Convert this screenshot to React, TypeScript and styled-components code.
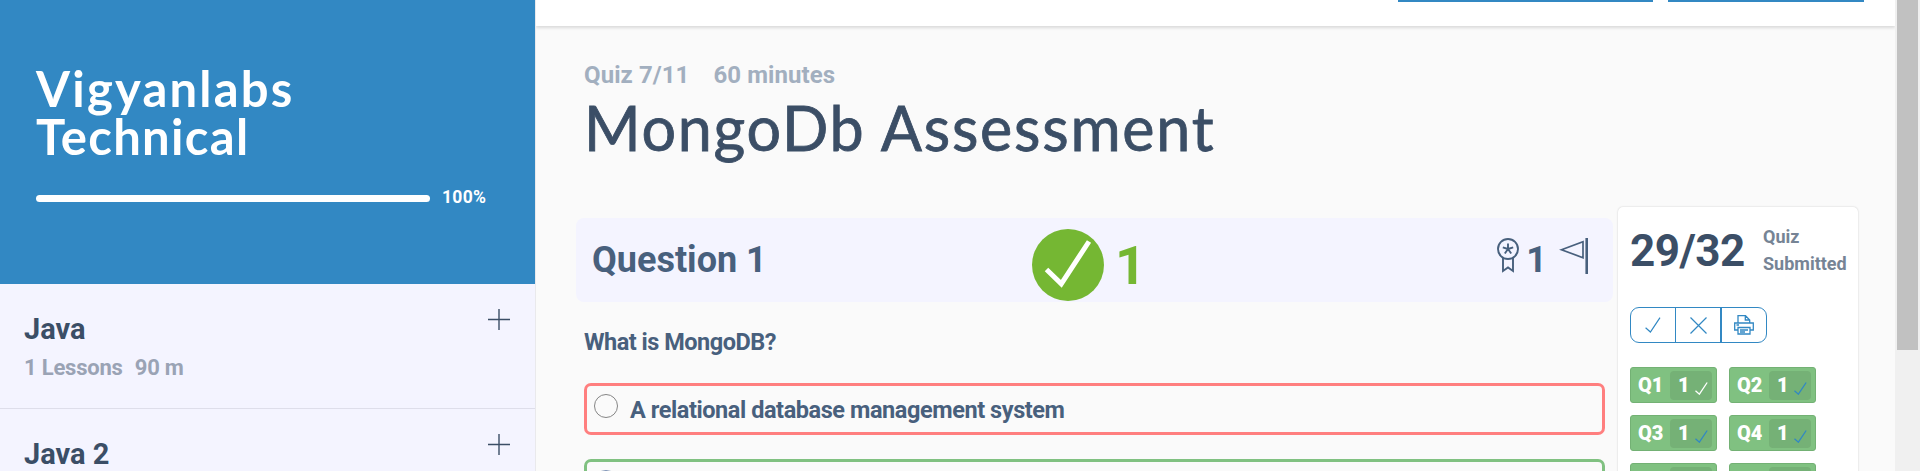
import React from "react";
import styled, { createGlobalStyle } from "styled-components";

const Global = createGlobalStyle`
  * { box-sizing: border-box; }
  body { margin: 0; overflow: hidden; font-family: Roboto, "Liberation Sans", sans-serif; font-weight: 700; background: #fafafa; }
`;
const Page = styled.div`
  display: grid; grid-template-columns: 536px 1359px 25px;
  width: 1920px; height: 471px; overflow: hidden;
`;
const Sidebar = styled.aside`
  background: #f4f4ff; border-right: 1px solid #e9e9ec; height: 471px; overflow: hidden;
`;
const Course = styled.header`
  height: 284px; background: #3288c3; color: #fff; padding: 64px 36px 0;
`;
const CourseName = styled.h1`
  margin: 0; width: 300px; font: 700 49px/48px Lato, sans-serif;
`;
const CourseWord = styled.span<{ $track: number }>`
  display: block; letter-spacing: ${p => p.$track}px;
`;
const Progress = styled.div`
  display: flex; align-items: center; gap: 12px; margin-top: 27px; height: 20px;
  font-size: 17.5px; line-height: 20px; white-space: nowrap; letter-spacing: 0.3px;
`;
const Track = styled.div`
  width: 394px; height: 7px; border-radius: 4px; background: #fff; margin-top: 2px;
`;
const Section = styled.section`
  display: flex; justify-content: space-between; height: 125px; padding: 24px 25px 0 24px;
  border-bottom: 1px solid #dedeea;
`;
const SectionName = styled.h2`
  margin: 0; font-size: 29px; line-height: 42px; color: #3b4e66;
`;
const SectionMeta = styled.div`
  display: flex; gap: 12px; font-size: 22px; line-height: 36px; color: #9aa3b5; letter-spacing: -0.2px;
`;
const Main = styled.main`
  height: 471px; overflow: hidden; background: #fafafa;
`;
const Topbar = styled.div`
  display: flex; justify-content: flex-end; gap: 15px; height: 26px; padding-right: 31px;
  background: #fff; box-shadow: 0 2px 3px rgba(0,0,0,.13);
`;
const TopButton = styled.div<{ $w: number }>`
  width: ${p => p.$w}px; height: 2px; background: #3288c3;
`;
const Heading = styled.div`
  height: 181px; padding: 33px 0 0 48px;
`;
const QuizMeta = styled.div`
  display: flex; gap: 24px; font-size: 24px; line-height: 32px; color: #a2afbf; letter-spacing: 0.08px;
`;
const QuizName = styled.h1`
  margin: 0; font: 400 61px/73px Lato, sans-serif; letter-spacing: 1.75px; color: #3b4e66;
  -webkit-text-stroke: 0.8px #3b4e66; white-space: nowrap;
`;
const Body = styled.div`
  display: flex; align-items: flex-start; padding-left: 40px;
`;
const Question = styled.div`
  width: 1037px; margin: 11px 5px 0 0;
`;
const QuestionBar = styled.div`
  display: grid; grid-template-columns: 440px 1fr auto; height: 84px;
  padding: 0 24px 0 16px; border-radius: 8px; background: #f4f4ff; color: #48607d;
`;
const QuestionName = styled.h3`
  margin: 0; font-size: 36px; line-height: 85px;
`;
const Score = styled.div`
  display: flex; align-items: flex-start; gap: 11px; padding-top: 11px; color: #75b733;
  font-size: 54px; line-height: 73px;
`;
const Points = styled.div`
  display: flex; align-items: flex-start; font-size: 36px; line-height: 85px;
`;
const Prompt = styled.p`
  margin: 0 0 0 8px; height: 81px; font-size: 23.5px; line-height: 80px; color: #48607d; letter-spacing: -0.5px;
`;
const Option = styled.div<{ $color: string }>`
  display: flex; height: 52px; width: 1021px; margin: 0 0 24px 8px; padding: 8px 0 0 7px; gap: 12px;
  border: 3px solid ${p => p.$color}; border-radius: 7px;
  font-size: 23.5px; line-height: 33px; color: #48607d; letter-spacing: -0.43px;
`;
const Radio = styled.span<{ $color: string }>`
  width: 24px; height: 24px; border-radius: 50%; border: 1px solid ${p => p.$color};
`;
const Summary = styled.aside`
  width: 240px; height: 300px; padding: 14px 0 0 12px; border-radius: 5px;
  background: #fff; box-shadow: 0 0 2px rgba(0,0,0,.2);
`;
const Result = styled.div`
  display: flex; height: 86px; font-size: 44px; line-height: 61px; color: #3b4e66;
`;
const Total = styled.span`
  width: 133px; letter-spacing: -0.5px;
`;
const Status = styled.div`
  width: 90px; padding-top: 2px; font-size: 18px; line-height: 27px; color: #768495;
`;
const Actions = styled.div`
  display: inline-flex; height: 36px; border: 1px solid #3288c3; border-radius: 9px; overflow: hidden;
`;
const Action = styled.div<{ $w: number; $edge?: number }>`
  display: flex; align-items: center; justify-content: center; width: ${p => p.$w}px;
  border-right: ${p => p.$edge ?? 0}px solid #3288c3;
`;
const Grid = styled.div`
  display: grid; grid-template-columns: 87px 87px; gap: 12px; margin-top: 24px;
`;
const Cell = styled.div`
  display: flex; justify-content: space-between; height: 36px; padding: 3px 4px 0 7px;
  border: 1px solid #73b174; border-radius: 3px; background: #80c181; color: #fff;
  font-size: 20px; font-weight: 900; line-height: 28px;
`;
const Mark = styled.div`
  display: flex; gap: 5px; width: 42px; height: 29px; margin-left: auto; padding-left: 8px;
  border-radius: 4px; background: #75b176;
`;
const Scrollbar = styled.div`
  background: #f0f0f0; padding: 0 2px;
`;
const Thumb = styled.div`
  width: 21px; height: 350px; background: #c1c1c1;
`;

const Plus = () => (
  <svg width="22" height="22" viewBox="0 0 22 22">
    <path d="M0 11.5H22M11 1V22" stroke="#3b4e66" strokeWidth="1.4" />
  </svg>
);
const Tick = ({ w, color }: { w: number; color: string }) => (
  <svg width={w} height={w} viewBox="0 0 16 16" fill="none" stroke={color} strokeWidth={w > 14 ? 1.2 : 1.6}>
    <path d="M.6 10.8 5.4 15 15 .6" />
  </svg>
);
const BigTick = () => (
  <svg width="72" height="72" viewBox="0 0 72 72">
    <circle cx="36" cy="36" r="36" fill="#75b733" />
    <path d="M14.5 40.5 29.3 54.8 57 12.5" fill="none" stroke="#fff" strokeWidth="5" />
  </svg>
);
const Medal = () => (
  <svg width="22" height="36" viewBox="0 0 22 36" fill="none" stroke="#48607d" strokeWidth="1.9">
    <circle cx="11" cy="11" r="10" />
    <path d="M11 11V5.5M11 11 5.8 9.3M11 11 7.8 15.5M11 11 14.2 15.5M11 11 16.2 9.3" />
    <path d="M6 20V33L11 29.5 16 33V20" />
  </svg>
);
const Flag = () => (
  <svg width="30" height="36" viewBox="0 0 30 36" fill="none" stroke="#48607d">
    <path d="M2.5 11.7 24 3.7V19.7Z" strokeWidth="1.7" />
    <path d="M27.7 0V36" strokeWidth="2.6" />
  </svg>
);
const Printer = () => (
  <svg width="20" height="20" viewBox="0 0 20 20" fill="none" stroke="#3288c3" strokeWidth="1.3">
    <path d="M4 8V.7H11.5L15.7 5V8M11.3 1V5H15.7M4 15H.7V8H19.3V15H16M4 12.5H16V19H4ZM6 15H14M6 17H11M2.5 10H5" />
  </svg>
);
const IconSlot = styled.span<{ $top: number; $left?: number; $right?: number }>`
  display: block; line-height: 0;
  margin: ${p => p.$top}px ${p => p.$right ?? 0}px 0 ${p => p.$left ?? 0}px;
`;

const sections = [{ name: "Java", lessons: "1 Lessons", time: "90 m" }, { name: "Java 2" }];
const cells = ["Q1", "Q2", "Q3", "Q4", "", ""];

export default function App() {
  return (
    <>
      <Global />
      <Page>
        <Sidebar>
          <Course>
            <CourseName>
              <CourseWord $track={2.2}>Vigyanlabs</CourseWord>
              <CourseWord $track={1.3}>Technical</CourseWord>
            </CourseName>
            <Progress><Track />100%</Progress>
          </Course>
          {sections.map(s => (
            <Section key={s.name}>
              <div>
                <SectionName>{s.name}</SectionName>
                {s.lessons && <SectionMeta><span>{s.lessons}</span><span>{s.time}</span></SectionMeta>}
              </div>
              <Plus />
            </Section>
          ))}
        </Sidebar>
        <Main>
          <Topbar><TopButton $w={255} /><TopButton $w={196} /></Topbar>
          <Heading>
            <QuizMeta><span>Quiz 7/11</span><span>60 minutes</span></QuizMeta>
            <QuizName>MongoDb Assessment</QuizName>
          </Heading>
          <Body>
            <Question>
              <QuestionBar>
                <QuestionName>Question 1</QuestionName>
                <Score><BigTick />1</Score>
                <Points>
                  <IconSlot $top={20} $right={7}><Medal /></IconSlot>
                  <span>1</span>
                  <IconSlot $top={20} $left={12}><Flag /></IconSlot>
                </Points>
              </QuestionBar>
              <Prompt>What is MongoDB?</Prompt>
              <Option $color="#ff7f7f"><Radio $color="#858585" />A relational database management system</Option>
              <Option $color="#80c181"><Radio $color="#7e93b5" /></Option>
            </Question>
            <Summary>
              <Result><Total>29/32</Total><Status>Quiz Submitted</Status></Result>
              <Actions>
                <Action $w={45} $edge={1}><Tick w={16} color="#3288c3" /></Action>
                <Action $w={46} $edge={2}>
                  <svg width="17" height="17" viewBox="0 0 17 17"><path d="M.5.5 16.5 16.5M16.5.5.5 16.5" stroke="#3288c3" strokeWidth="1.2" /></svg>
                </Action>
                <Action $w={44}><Printer /></Action>
              </Actions>
              <Grid>
                {cells.map((q, i) => (
                  <Cell key={i}>
                    {q}
                    <Mark>{q && <>1<IconSlot $top={11}><Tick w={13} color={i ? "#3288c3" : "#fff"} /></IconSlot></>}</Mark>
                  </Cell>
                ))}
              </Grid>
            </Summary>
          </Body>
        </Main>
        <Scrollbar><Thumb /></Scrollbar>
      </Page>
    </>
  );
}
